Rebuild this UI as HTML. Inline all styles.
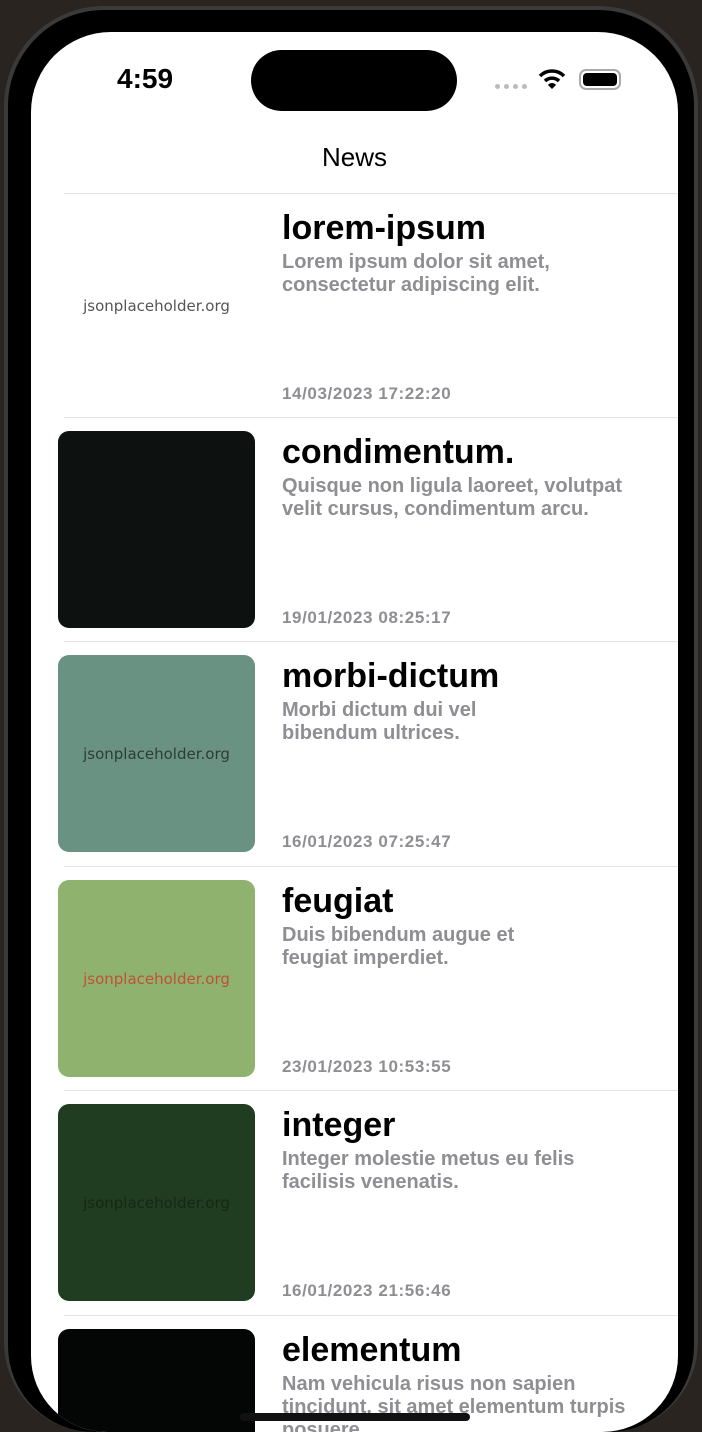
<!DOCTYPE html>
<html style="width:702px;height:1432px;overflow:hidden"><head><style>
*{margin:0;padding:0;box-sizing:border-box}
body{width:702px;height:1432px;overflow:hidden;background:#2a2420;font-family:"Liberation Sans",sans-serif;position:relative}
.frame{position:absolute;left:4px;top:6px;width:694px;height:1426px;border-radius:100px 100px 90px 90px;background:#3a3a3a;}
.frame2{position:absolute;left:8px;top:10px;width:686px;height:1422px;border-radius:96px 96px 86px 86px;background:#000;}
.screen{position:absolute;left:31px;top:32px;width:647px;height:1400px;border-radius:80px 80px 76px 76px;background:#fff;overflow:hidden}
.island{position:absolute;left:220px;top:18px;width:206px;height:61px;border-radius:31px;background:#000}
.time{position:absolute;left:86px;top:31px;font-size:28px;font-weight:600;color:#000}
.title{position:absolute;left:0;width:647px;top:110px;text-align:center;font-size:26px;color:#000}
.row{position:absolute;left:0;width:647px;height:224px}
.sep{position:absolute;left:33px;right:0;top:0;border-top:1.5px solid #e4e4e6}
.img{position:absolute;left:27px;top:14px;width:197px;height:197px;border-radius:11px;display:flex;align-items:center;justify-content:center;font-size:15px;font-family:"DejaVu Sans",sans-serif}
.h{position:absolute;left:251px;top:16px;font-size:34px;font-weight:bold;color:#000;letter-spacing:0px}
.d{position:absolute;left:251px;top:58px;font-size:20px;font-weight:bold;color:#8e8e93;line-height:23px;width:390px}
.t{position:absolute;left:251px;top:191px;font-size:17px;font-weight:bold;color:#8e8e93;letter-spacing:0.6px}
.home{position:absolute;left:209px;top:1381px;width:230px;height:8px;border-radius:4px;background:#111}
</style></head><body>
<div class="frame"></div><div class="frame2"></div>
<div class="screen">
<div class="island"></div>
<div class="time">4:59</div>
<div style="position:absolute;left:464px;top:52px;width:32px;height:5px;border-top:5px dotted #bbb"></div>
<svg style="position:absolute;left:508px;top:36px" width="26" height="22" viewBox="0 0 26 22"><path d="M1 8 A17 17 0 0 1 25 8" stroke="#000" stroke-width="3.5" fill="none"/><path d="M6 13 A10 10 0 0 1 20 13" stroke="#000" stroke-width="3.5" fill="none"/><path d="M9 17 L13 21 L17 17 A5 5 0 0 0 9 17Z" fill="#000"/></svg>
<div style="position:absolute;left:548px;top:37px;width:42px;height:21px;border:2px solid #aaa;border-radius:7px;padding:2px"><div style="width:100%;height:100%;background:#000;border-radius:4px"></div></div>
<div class="title">News</div>

<div class="row" style="top:161px"><div class="sep"></div><div class="img" style="background:#fff;color:#555">jsonplaceholder.org</div><div class="h">lorem-ipsum</div><div class="d">Lorem ipsum dolor sit amet,<br>consectetur adipiscing elit.</div><div class="t">14/03/2023 17:22:20</div></div>
<div class="row" style="top:385px"><div class="sep"></div><div class="img" style="background:#0d1210;color:#0d1210"></div><div class="h">condimentum.</div><div class="d">Quisque non ligula laoreet, volutpat<br>velit cursus, condimentum arcu.</div><div class="t">19/01/2023 08:25:17</div></div>
<div class="row" style="top:609px"><div class="sep"></div><div class="img" style="background:#6a9282;color:#2d3d35">jsonplaceholder.org</div><div class="h">morbi-dictum</div><div class="d">Morbi dictum dui vel<br>bibendum ultrices.</div><div class="t">16/01/2023 07:25:47</div></div>
<div class="row" style="top:834px"><div class="sep"></div><div class="img" style="background:#8fb36e;color:#c0503a">jsonplaceholder.org</div><div class="h">feugiat</div><div class="d">Duis bibendum augue et<br>feugiat imperdiet.</div><div class="t">23/01/2023 10:53:55</div></div>
<div class="row" style="top:1058px"><div class="sep"></div><div class="img" style="background:#213d21;color:#142814">jsonplaceholder.org</div><div class="h">integer</div><div class="d">Integer molestie metus eu felis<br>facilisis venenatis.</div><div class="t">16/01/2023 21:56:46</div></div>
<div class="row" style="top:1283px;height:117px;overflow:hidden"><div class="sep"></div><div class="img" style="background:#030605;color:#030605"></div><div class="h">elementum</div><div class="d">Nam vehicula risus non sapien<br>tincidunt, sit amet elementum turpis<br>posuere.</div></div>
<div class="home"></div>
</div>
</body></html>
